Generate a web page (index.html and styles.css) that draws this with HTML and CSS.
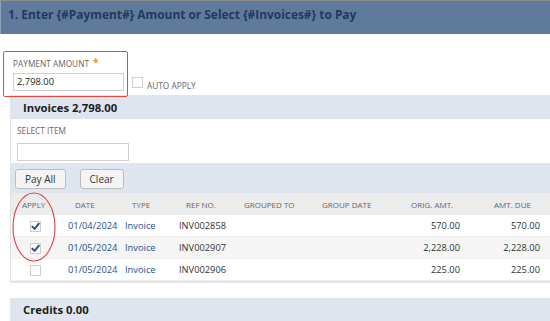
FILE: index.html
```html
<!DOCTYPE html>
<html>
<head>
<meta charset="utf-8">
<link rel="stylesheet" href="styles.css">
</head>
<body>
<div class="header">1. Enter {#Payment#} Amount or Select {#Invoices#} to Pay</div>
<div class="main">
  <div class="payment-section">
    <div class="field">
      <div class="label">PAYMENT AMOUNT <span class="req">*</span></div>
      <div class="field-row">
        <div class="input">2,798.00</div>
        <span class="checkbox"></span>
        <span class="cb-label">AUTO APPLY</span>
      </div>
    </div>
  </div>
  <div class="bar"><span class="bar-title">Invoices 2,798.00</span></div>
  <div class="select-area">
    <div class="label">SELECT ITEM</div>
    <div class="input select-input"></div>
  </div>
  <div class="button-bar">
    <button class="btn">Pay All</button>
    <button class="btn">Clear</button>
  </div>
  <div class="table-wrap">
    <table class="grid">
      <colgroup>
        <col class="c-apply"><col class="c-date"><col class="c-type"><col class="c-ref"><col class="c-grp"><col class="c-gdate"><col class="c-orig"><col class="c-due"><col class="c-cur">
      </colgroup>
      <thead>
        <tr>
          <th class="h-apply">APPLY</th>
          <th>DATE</th>
          <th>TYPE</th>
          <th>REF NO.</th>
          <th>GROUPED TO</th>
          <th>GROUP DATE</th>
          <th class="h-orig">ORIG. AMT.</th>
          <th class="h-due">AMT. DUE</th>
          <th></th>
        </tr>
      </thead>
      <tbody>
        <tr>
          <td class="apply"><span class="checkbox"><svg class="tick" width="9" height="9" viewBox="0 0 9 9"><path d="M1.3 4.6 L3.6 6.9 L7.8 1.6" fill="none" stroke="#234f8e" stroke-width="1.9" stroke-linecap="round" stroke-linejoin="round"/></svg></span></td>
          <td class="link">01/04/2024</td>
          <td class="link">Invoice</td>
          <td>INV002858</td>
          <td></td><td></td>
          <td class="num">570.00</td>
          <td class="num">570.00</td>
          <td>USD</td>
        </tr>
        <tr class="alt">
          <td class="apply"><span class="checkbox"><svg class="tick" width="9" height="9" viewBox="0 0 9 9"><path d="M1.3 4.6 L3.6 6.9 L7.8 1.6" fill="none" stroke="#234f8e" stroke-width="1.9" stroke-linecap="round" stroke-linejoin="round"/></svg></span></td>
          <td class="link">01/05/2024</td>
          <td class="link">Invoice</td>
          <td>INV002907</td>
          <td></td><td></td>
          <td class="num">2,228.00</td>
          <td class="num">2,228.00</td>
          <td>USD</td>
        </tr>
        <tr>
          <td class="apply"><span class="checkbox"></span></td>
          <td class="link">01/05/2024</td>
          <td class="link">Invoice</td>
          <td>INV002906</td>
          <td></td><td></td>
          <td class="num">225.00</td>
          <td class="num">225.00</td>
          <td>USD</td>
        </tr>
      </tbody>
    </table>
  </div>
  <div class="bar credits"><span class="bar-title">Credits 0.00</span></div>
</div>
<div class="mark-box"></div>
<svg class="mark-ellipse" width="50" height="74" viewBox="0 0 50 74"><ellipse cx="24" cy="36" rx="21" ry="34" fill="none" stroke="#e2403a" stroke-width="1.1"/></svg>
</body>
</html>
```
FILE: styles.css
```css
html, body {
  margin: 0;
  padding: 0;
  width: 550px;
  height: 321px;
  overflow: hidden;
  background: #fff;
  font-family: "Open Sans", "Liberation Sans", sans-serif;
  color: #333;
}
body { position: relative; }

.header {
  height: 34px;
  box-sizing: border-box;
  border-top: 1px solid #8e8e8e;
  border-left: 1px solid #8fa3bb;
  background: #5f7a9b;
  color: #213a5c;
  font-weight: 700;
  font-size: 11.9px;
  line-height: 14px;
  padding: 6px 0 0 7px;
  white-space: nowrap;
}

.main { padding-left: 10px; }

.payment-section {
  height: 61px;
  box-sizing: border-box;
  padding: 23px 0 0 3px;
}
.label {
  font-size: 8.3px;
  color: #666;
  line-height: 10px;
}
.req { color: #e8952b; font-size: 10px; font-weight: 700; margin-left: 2px; vertical-align: 1px; }
.field-row { display: flex; align-items: flex-end; margin-top: 4px; }
.input {
  width: 111px;
  height: 18px;
  box-sizing: border-box;
  border: 1px solid #cfcfcf;
  font-size: 9.4px;
  line-height: 16px;
  padding-left: 3px;
  color: #222;
}
.field-row .checkbox { margin: 0 4px 3px 8px; }
.cb-label { font-size: 8.3px; color: #666; line-height: 10px; margin-bottom: 0; }

.checkbox {
  display: inline-flex;
  align-items: center;
  justify-content: center;
  width: 11px;
  height: 11px;
  box-sizing: border-box;
  border: 1px solid #cfcfcf;
  background: #fff;
  vertical-align: middle;
}
.tick { display: block; }

.bar {
  height: 24px;
  background: #dfe5ee;
  display: flex;
  align-items: center;
  padding-left: 13px;
}
.bar-title { font-weight: 700; font-size: 11.3px; color: #1c1c1c; }

.select-area {
  height: 44px;
  box-sizing: border-box;
  border-left: 1px solid #e2e2e2;
  padding: 7px 0 0 6px;
}
.select-input { margin-top: 7px; width: 112px; }

.button-bar {
  height: 30px;
  box-sizing: border-box;
  background: #dfe5ee;
  padding: 6px 0 0 5px;
  display: flex;
  gap: 14px;
}
.btn {
  height: 20px;
  box-sizing: border-box;
  border: 1px solid #bdbdbd;
  border-radius: 3px;
  background: #f4f4f4;
  font-family: "Open Sans", "Liberation Sans", sans-serif;
  font-size: 10px;
  font-weight: 500;
  color: #333;
  padding: 0 9px;
}

.table-wrap {
  border-left: 1px solid #e0e0e0;
  border-bottom: 2px solid #e4e4e4;
  margin-bottom: 15px;
  width: 600px;
}
.grid {
  border-collapse: collapse;
  table-layout: fixed;
  width: 600px;
}
.c-apply { width: 51px; }
.c-date { width: 57px; }
.c-type { width: 54px; }
.c-ref { width: 58px; }
.c-grp { width: 78px; }
.c-gdate { width: 81px; }
.c-orig { width: 76px; }
.c-due { width: 80px; }
.c-cur { width: 65px; }

.grid th {
  background: #ececec;
  height: 22px;
  padding: 0 0 0 13px;
  font-size: 8px;
  font-weight: 400;
  color: #666;
  text-align: left;
  white-space: nowrap;
}
.grid th.h-apply { padding-left: 11px; }
.grid th.h-orig { padding-left: 21px; }
.grid th.h-due { padding-left: 28px; }

.grid td {
  height: 21px;
  padding: 0 0 0 6px;
  font-size: 9.3px;
  color: #333;
  white-space: nowrap;
  border-bottom: 1px solid #f0f0f0;
}
.grid tr.alt td { background: #f5f5f5; }
.grid td.apply { padding-left: 19px; }
.grid td.link { color: #245193; }
.grid td.num { text-align: right; padding: 0 6px 0 0; }

.credits { height: 23px; }

.mark-box {
  position: absolute;
  left: 3px;
  top: 51px;
  width: 125px;
  height: 46px;
  box-sizing: border-box;
  border: 1.5px solid #e8483b;
  border-radius: 2px;
}
.mark-ellipse {
  position: absolute;
  left: 10px;
  top: 191px;
}
```
